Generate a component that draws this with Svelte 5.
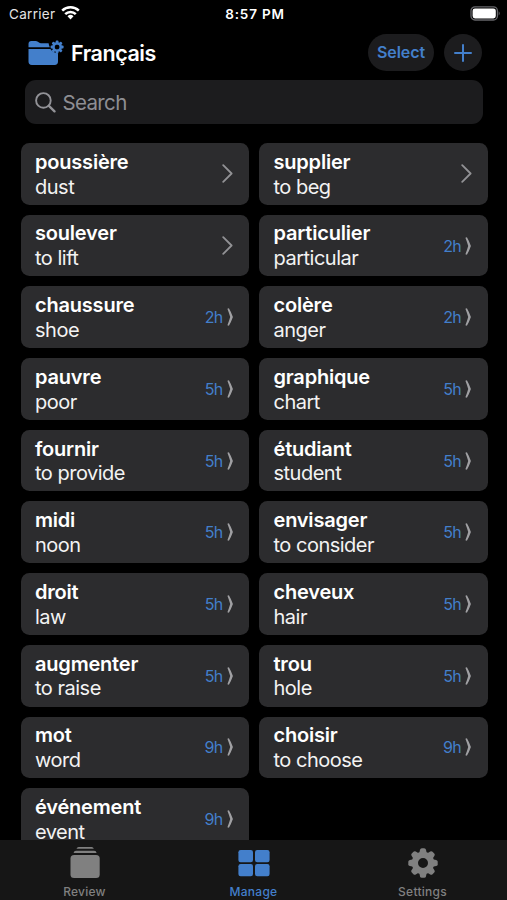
<script>
  const cards = [
    { word: 'poussière', meaning: 'dust' },
    { word: 'supplier', meaning: 'to beg' },
    { word: 'soulever', meaning: 'to lift' },
    { word: 'particulier', meaning: 'particular', due: '2h' },
    { word: 'chaussure', meaning: 'shoe', due: '2h' },
    { word: 'colère', meaning: 'anger', due: '2h' },
    { word: 'pauvre', meaning: 'poor', due: '5h' },
    { word: 'graphique', meaning: 'chart', due: '5h' },
    { word: 'fournir', meaning: 'to provide', due: '5h' },
    { word: 'étudiant', meaning: 'student', due: '5h' },
    { word: 'midi', meaning: 'noon', due: '5h' },
    { word: 'envisager', meaning: 'to consider', due: '5h' },
    { word: 'droit', meaning: 'law', due: '5h' },
    { word: 'cheveux', meaning: 'hair', due: '5h' },
    { word: 'augmenter', meaning: 'to raise', due: '5h' },
    { word: 'trou', meaning: 'hole', due: '5h' },
    { word: 'mot', meaning: 'word', due: '9h' },
    { word: 'choisir', meaning: 'to choose', due: '9h' },
    { word: 'événement', meaning: 'event', due: '9h' },
  ];

  const teeth = [0, 45, 90, 135, 180, 225, 270, 315];

  let search = $state('');
  let tab = $state('manage');
</script>

<div class="screen">
  <div class="status">
    <div class="carrier">
      <span>Carrier</span>
      <svg width="19" height="16" viewBox="0 0 19 16">
        <g fill="none" stroke="#fff" stroke-width="2.5">
          <path d="M1.2 5.6a11.8 11.8 0 0 1 16.6 0" />
          <path d="M4.2 9.1a7.5 7.5 0 0 1 10.6 0" />
        </g>
        <path d="M6.5 11.3a4.3 4.3 0 0 1 6 0L9.5 14.4z" fill="#fff" />
      </svg>
    </div>
    <span class="time">8:57 PM</span>
    <div class="battery">
      <svg width="31" height="15" viewBox="0 0 31 15">
        <rect x="1" y="0.8" width="26.4" height="13.2" rx="4" fill="none" stroke="#66666a" stroke-width="1.3" />
        <rect x="2.6" y="2.4" width="23.2" height="10" rx="2.4" fill="#fff" />
        <path d="M28.7 5.2q2 2.2 0 4.4z" fill="#66666a" />
      </svg>
    </div>
  </div>

  <header>
    <svg class="folder" width="36" height="26" viewBox="0 0 36 26">
      <g fill="#437fcb">
        <path d="M.5 7.2V3.9Q.5 1 3.4 1h4.2q1.3 0 2.3.8l1.1.8q.8.6 2 .6h7.6q.3 2.2 1.2 4z" />
        <path d="M.5 9.1h21.9q2.5 4 7.6 4.2v8.3q0 3.4-3.4 3.4H3.9Q.5 25 .5 21.6z" />
        {#each teeth as angle}
          <rect x="27.7" y=".5" width="2.8" height="4" rx=".9" transform="rotate({angle} 29.1 7)" />
        {/each}
      </g>
      <circle cx="29.1" cy="7" r="3.7" fill="none" stroke="#437fcb" stroke-width="2.3" />
    </svg>
    <h1>Français</h1>
    <button class="select">Select</button>
    <button class="add" aria-label="Add">
      <svg width="18" height="18" viewBox="0 0 18 18">
        <path d="M9 1v16M1 9h16" stroke="#437fcb" stroke-width="2" stroke-linecap="round" />
      </svg>
    </button>
  </header>

  <label class="search">
    <svg width="21" height="21" viewBox="0 0 21 21" fill="none" stroke="#929297" stroke-linecap="round">
      <circle cx="8.4" cy="8.4" r="7.3" stroke-width="1.9" />
      <path d="M13.9 13.9l5.6 5.5" stroke-width="2.3" />
    </svg>
    <input placeholder="Search" bind:value={search} />
  </label>

  <main>
    {#each cards as card}
      <div class="card">
        <div class="texts">
          <div class="word">{card.word}</div>
          <div class="meaning">{card.meaning}</div>
        </div>
        {#if card.due}
          <span class="due">{card.due}</span>
          <svg class="squeezed" width="6" height="18" viewBox="0 0 6 18">
            <path d="M.4.7 1.9.2Q4.2 4 5.9 9 4.2 14 1.9 17.8L.4 17.3Q2.1 13 3.2 9 2.1 5 .4.7z" fill="#a0a0a3" />
          </svg>
        {:else}
          <svg width="11" height="19" viewBox="0 0 11 19">
            <path d="M1.2 1.2l8.4 8.3-8.4 8.3" fill="none" stroke="#929295" stroke-width="1.8" stroke-linecap="round" stroke-linejoin="round" />
          </svg>
        {/if}
      </div>
    {/each}
  </main>

  <nav>
    <button class:active={tab === 'review'} onclick={() => (tab = 'review')}>
      <svg width="32" height="34" viewBox="0 0 32 34" fill="currentColor">
        <path d="M7.5 2.7Q8 1 9.7 1h13q1.6 0 2.1 1.7z" />
        <path d="M4.6 6.9Q5 4.7 7 4.7h18.2q2 0 2.4 2.2z" />
        <rect x="1.5" y="8.9" width="29.2" height="23.2" rx="3.6" />
      </svg>
      <span>Review</span>
    </button>
    <button class:active={tab === 'manage'} onclick={() => (tab = 'manage')}>
      <svg width="32" height="34" viewBox="0 0 32 34" fill="currentColor">
        <rect x=".4" y="4" width="14.6" height="12.2" rx="2.2" />
        <rect x="17" y="4" width="14.6" height="12.2" rx="2.2" />
        <rect x=".4" y="18.1" width="14.6" height="12.2" rx="2.2" />
        <rect x="17" y="18.1" width="14.6" height="12.2" rx="2.2" />
      </svg>
      <span>Manage</span>
    </button>
    <button class:active={tab === 'settings'} onclick={() => (tab = 'settings')}>
      <svg width="32" height="34" viewBox="0 0 32 34" fill="currentColor">
        <circle cx="16" cy="17" r="8.1" fill="none" stroke="currentColor" stroke-width="6.2" />
        {#each teeth as angle}
          <path d="M12.2 7.5 13 3.8Q13.4 2.3 14.8 2.3h2.4q1.4 0 1.8 1.5l.8 3.7z" transform="rotate({angle} 16 17)" />
        {/each}
      </svg>
      <span>Settings</span>
    </button>
  </nav>
</div>

<style>
  :global(body) {
    background: #000;
  }

  .screen {
    display: flex;
    flex-direction: column;
    width: 507px;
    height: 900px;
    overflow: hidden;
    background: #000;
    color: #fff;
    font-family: Inter, 'Liberation Sans', sans-serif;
  }

  button {
    border: 0;
    padding: 0;
    font-family: inherit;
    cursor: pointer;
  }

  svg {
    flex: none;
    display: block;
  }

  .status {
    display: grid;
    grid-template-columns: 1fr auto 1fr;
    align-items: center;
    height: 27px;
    padding: 0 6px 0 9px;
    box-sizing: border-box;
    font-size: 13.5px;
  }

  .carrier {
    display: flex;
    align-items: center;
    gap: 6px;
    color: #e4e4e4;
    letter-spacing: 0.3px;
  }

  .carrier svg {
    margin-bottom: 1px;
  }

  .time {
    font-weight: 600;
    letter-spacing: 0.8px;
  }

  .battery {
    justify-self: end;
  }

  header {
    display: flex;
    align-items: center;
    height: 51px;
    padding: 0 25px 0 28px;
  }

  h1 {
    flex: 1;
    margin: 0 0 0 7px;
    font-size: 21.5px;
    font-weight: 600;
    letter-spacing: -0.45px;
  }

  .select,
  .add {
    display: flex;
    align-items: center;
    justify-content: center;
    height: 37px;
    background: #1c1c1e;
    color: #437fcb;
  }

  .select {
    width: 66px;
    margin-right: 10px;
    padding-bottom: 1px;
    border-radius: 19px;
    font-size: 16px;
    font-weight: 600;
    letter-spacing: -0.1px;
  }

  .add {
    width: 38px;
    border-radius: 50%;
  }

  .search {
    display: flex;
    align-items: center;
    flex: none;
    gap: 6.5px;
    height: 44px;
    margin: 2px 24px 19px 25px;
    padding: 0 10px;
    box-sizing: border-box;
    border-radius: 11px;
    background: #1c1c1e;
  }

  input {
    flex: 1;
    min-width: 0;
    padding: 0;
    border: 0;
    outline: 0;
    background: none;
    color: #fff;
    font: 20.5px Inter, 'Liberation Sans', sans-serif;
    letter-spacing: -0.65px;
  }

  input::placeholder {
    color: #8e8e93;
    opacity: 1;
  }

  main {
    display: grid;
    flex: 1;
    min-height: 0;
    grid-template-columns: 1fr 1fr;
    grid-auto-rows: 61.7px;
    gap: 10px;
    padding: 0 19.5px 0 20.5px;
    overflow: hidden;
  }

  .card {
    display: flex;
    align-items: center;
    padding: 0 16px 0 14.5px;
    border-radius: 8.5px;
    background: #2c2c2e;
  }

  .texts {
    flex: 1;
    padding-top: 1.5px;
    font-size: 20px;
    line-height: 24.8px;
  }

  .word {
    font-weight: 600;
    letter-spacing: -0.2px;
  }

  .meaning {
    color: #f3f3f3;
    letter-spacing: -0.5px;
  }

  .due {
    margin-right: 4px;
    color: #437fcb;
    font-size: 16px;
    letter-spacing: -0.7px;
  }

  .squeezed {
    margin-right: 0.5px;
  }

  nav {
    display: grid;
    flex: none;
    grid-template-columns: repeat(3, 1fr);
    height: 60px;
    background: #161616;
  }

  nav button {
    display: flex;
    flex-direction: column;
    align-items: center;
    padding-top: 6px;
    background: none;
    color: #808080;
  }

  nav .active {
    color: #437fcb;
  }

  nav span {
    margin-top: 4px;
    font-size: 12px;
    font-weight: 500;
    line-height: 15px;
    letter-spacing: 0.25px;
  }
</style>
